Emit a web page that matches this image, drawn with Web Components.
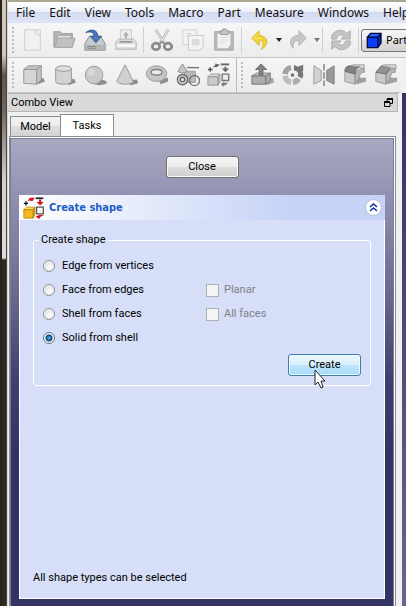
<!DOCTYPE html>
<html lang="en">
<head>
<meta charset="utf-8">
<title>Part - Create shape</title>
<style>
  html, body { height: 100%; }
  body {
    margin: 0;
    overflow: hidden;
    font: 11px/16px Roboto, sans-serif;
    color: #000;
  }
</style>
</head>
<body>
<app-window></app-window>

<script>
const ICONS = {
  new: `<path d="M4 2h17v22H4z" fill="#f1f1f1" stroke="#cdcdcd"/><path d="M15 2l6 6-5-1z" fill="#fff" stroke="#c9c9c9"/>`,
  open: `<path d="M2 21V4h7l2 2h11v5" fill="#b5b5b5" stroke="#9c9c9c"/><path d="M6 8h15v11H6z" fill="#dedede" stroke="#a9a9a9"/><path d="M3 21L6 11h19l-3 10z" fill="#c0c0c0" stroke="#a0a0a0"/>`,
  save: `<path d="M2 17l5-8h12l5 8v7H2z" fill="#c9cbce" stroke="#85878a"/><path d="M3 18h20v5H3z" fill="#b4b6b9"/><path d="M5 20h9M5 22h9" stroke="#85878a"/><path d="M3 5c6-5 13-3 13 4h4l-6 7-6-7h4c0-4-3-6-9-4z" fill="#4a78b8" stroke="#2d5591"/>`,
  print: `<path d="M7 2h12v12H7z" fill="#eee" stroke="#ccc"/><path d="M13 4l3 4h-2v3h-2V8h-2z" fill="#aaa"/><path d="M2 15l3-3h16l3 3v8H2z" fill="#dfdfdf" stroke="#b0b0b0"/><path d="M6 15h14" stroke="#999" stroke-width="2"/><path d="M3 19h20" stroke="#fff" stroke-width="2"/>`,
  cut: `<path d="M6 2l9 14M20 2l-9 14" stroke="#bdbdbd" stroke-width="3" fill="none"/><path d="M6 2l8 13M20 2l-8 13" stroke="#ececec" fill="none"/><ellipse cx="6.500" cy="20" rx="4" ry="3.500" fill="none" stroke="#8b8b8b" stroke-width="3"/><ellipse cx="19.500" cy="20" rx="4" ry="3.500" fill="none" stroke="#8b8b8b" stroke-width="3"/><path d="M9 18l4-3 4 3" fill="none" stroke="#8b8b8b" stroke-width="2"/>`,
  copy: `<path d="M2 2h15v16H2z" fill="#f3f3f3" stroke="#cfcfcf"/><path d="M5 6h6M5 9h4" stroke="#d4d4d4"/><path d="M8 8h16v13l-4 3H8z" fill="#f3f3f3" stroke="#c5c5c5"/><path d="M12 12h8v7h-8z" fill="#dcdcdc"/>`,
  paste: `<path d="M3 4h20v20H3z" fill="#b9b9b9" stroke="#a3a3a3"/><path d="M6 6h14v12l-3 4H6z" fill="#f2f2f2"/><path d="M9 10h8M9 13h8M9 16h5" stroke="#d4d4d4"/><path d="M9 3h3V1h3v2h3v4H9z" fill="#c6c6c6" stroke="#929292"/>`,
  undo: `<path d="M12 3L4 11l8 8v-5c5-1 6 4 2 9 9-4 9-14-2-15z" fill="#f2d335" stroke="#dab624"/><path d="M11 6l-5 5h8" fill="none" stroke="#fbec8d"/>`,
  redo: `<path d="M14 3l8 8-8 8v-5c-6-1-7 4-6 8-6-6-3-14 6-14z" fill="#c7c7c7" stroke="#b2b2b2"/>`,
  refresh: `<path d="M3 12V8c4-7 13-7 16-2l4-3v9h-10l3-3c-3-3-7-1-8 3z" fill="#c4c4c4" stroke="#aaa"/><path d="M23 14v4c-4 7-13 7-16 2l-4 3v-9h10l-3 3c3 3 7 1 8-3z" fill="#c4c4c4" stroke="#aaa"/>`,
  box: `<path d="M14 20l10-4 2 4-8 3z" fill="#8e8e8e"/><path d="M3 7h14v16L3 22z" fill="#d5d5d5" stroke="#939393"/><path d="M3 7l5-4h14l-5 4zM22 3v15l-5 5V7z" fill="#c3c3c3" stroke="#939393"/>`,
  cylinder: `<path d="M16 19l8-2 2 4-8 3z" fill="#8e8e8e"/><path d="M4 6v14c0 4 17 4 17 0V6" fill="#d3d3d3" stroke="#939393"/><ellipse cx="12.500" cy="6" rx="8.500" ry="3" fill="#dfdfdf" stroke="#939393"/>`,
  sphere: `<ellipse cx="18" cy="21" rx="8" ry="3" fill="#8e8e8e"/><circle cx="12" cy="13" r="9.500" fill="#cacaca" stroke="#999"/><circle cx="9" cy="10" r="4" fill="#d8d8d8"/>`,
  cone: `<path d="M15 19l10-1 1 4-8 2z" fill="#8e8e8e"/><path d="M12 2L3 20c2 4 16 4 18 0z" fill="#d0d0d0" stroke="#969696"/>`,
  torus: `<path d="M15 18l10-2v4l-8 3z" fill="#8e8e8e"/><ellipse cx="12.500" cy="11.500" rx="11" ry="8.500" fill="#c6c6c6" stroke="#969696"/><ellipse cx="12.500" cy="10" rx="6" ry="3" fill="#ececec" stroke="#808080" stroke-width="1.500"/>`,
  primitives: `<path d="M9 9h12v12H9z" fill="#b8b8b8" stroke="#a0a0a0"/><path d="M7 1L2 9c2 2 8 2 10 0z" fill="#c7c7c7" stroke="#8b8b8b"/><path d="M12 5h13" stroke="#777" stroke-width="1.500"/><circle cx="7" cy="18" r="5.500" fill="#ddd" stroke="#666" stroke-width="1.500"/><circle cx="7" cy="18" r="2.500" fill="none" stroke="#666" stroke-width="1.500"/><circle cx="20" cy="19" r="5.500" fill="none" stroke="#777" stroke-width="1.500"/>`,
  builder: `<path d="M1 15l3-3h10l-2 3z" fill="#ddd" stroke="#999"/><path d="M1 15h11v9H1zM12 15l2-3v9l-2 3z" fill="#c9c9c9" stroke="#999"/><path d="M1 7h5M3.500 4.500v5" stroke="#555" stroke-width="1.500"/><path d="M6 5l3-3V.5l5 1.500-4 3V4z" fill="#666"/><path d="M15 1.500h9" stroke="#666" stroke-width="2"/><path d="M19 4h2v2h3l-4 4-4-4h3z" fill="#666"/><path d="M16.500 12h7v7h-7z" fill="#eee" stroke="#777" stroke-width="1.500"/><path d="M23 21l-3 3h-2v2l-3-3 4-3v2z" fill="#777"/>`,
  builderColor: `<path d="M1 15l3-3h10l-2 3z" fill="#ffe05a" stroke="#bb8a0c"/><path d="M1 15h11v10H1z" fill="#f6b720" stroke="#bb8a0c"/><path d="M12 15l2-3v9l-2 4z" fill="#d98f0a" stroke="#bb8a0c"/><path d="M1 7.500h5M3.500 5v5" stroke="#111" stroke-width="1.500"/><path d="M5 5l3-4 6 0-3 4-3-1z" fill="#d91320"/><path d="M15 1.500h9" stroke="#222" stroke-width="2"/><path d="M19 3h2.500v3h3l-4.200 4-4.300-4h3z" fill="#d91320"/><path d="M16 12h8v8h-8z" fill="#f5f5f5" stroke="#555" stroke-width="1.500"/><path d="M25 22l-4 1-2 3-4-3 5-2z" fill="#d91320"/>`,
  extrude: `<path d="M17 19l8-3 1 5-8 3z" fill="#a5a5a5"/><path d="M2 14l5-3h15l-5 3z" fill="#ccc" stroke="#777"/><path d="M2 14h15v9H2zM17 14l5-3v8l-5 4z" fill="#acacac" stroke="#777"/><path d="M12 1l6 6h-4v6h-4V7H6z" fill="#858585" stroke="#666"/>`,
  revolve: `<g fill="none" stroke-width="6"><path d="M11 5A8 8 0 0 0 4.500 12" stroke="#a2a2a2"/><path d="M4.500 14A8 8 0 0 0 11 21" stroke="#bdbdbd"/><path d="M13 21A8 8 0 0 0 19 17" stroke="#adadad"/></g><path d="M14 2l4 2 6-2v7h-1c2 3 1 6 0 8l-5-3c1-3 0-4-1-5l-3-1z" fill="#777"/><circle cx="12.500" cy="13" r="2" fill="#777"/>`,
  mirror: `<path d="M2 3l8 5v11l-8 4z" fill="#d2d2d2" stroke="#999"/><path d="M24 3l-8 5v11l8 4z" fill="#999" stroke="#808080"/><path d="M13 1v24" stroke="#999" stroke-width="2" stroke-dasharray="7 2"/>`,
  fillet: `<path d="M13 19l3-3h9v4l-10 3z" fill="#a0a0a0"/><path d="M2 9h11v14L2 20z" fill="#cacaca" stroke="#999"/><path d="M13 12c1-4 5-6 10-6v4c-4 0-5 2-5 6l-5 7z" fill="#b5b5b5" stroke="#909090"/><path d="M2 9c0-4 2-6 6-6l11 1c-4 1-6 4-6 8z" fill="#808080" stroke="#6c6c6c"/><path d="M8 3l3-1h12v4c-3 0-4-1-5-2z" fill="#dcdcdc" stroke="#999"/>`,
  chamfer: `<path d="M13 19l3-3h9v4l-10 3z" fill="#a0a0a0"/><path d="M2 10h11v13L2 20z" fill="#cacaca" stroke="#999"/><path d="M13 12c2-4 5-6 10-6v4c-4 0-5 2-5 6l-5 7z" fill="#b5b5b5" stroke="#909090"/><path d="M2 10l6-7 10 2-5 7z" fill="#929292" stroke="#6c6c6c"/><path d="M8 3l3-1h13v4l-6-1z" fill="#dcdcdc" stroke="#999"/>`,
  cube: `<path d="M2 8l5-6h16l-5 6z" fill="#2a62ff"/><path d="M2 8h16v16H2z" fill="#0a3cff"/><path d="M18 8l5-6v15l-5 7z" fill="#0624b8"/><path d="M2 8l5-6h16v15l-5 7H2zM2 8h16v16M18 8l5-6" fill="none" stroke="#000a3c" stroke-width="2"/>`
}

const svg = name => `<svg viewBox="0 0 26 26" aria-hidden="true">${ICONS[name]}</svg>`

class AppMenuBar extends HTMLElement {
  connectedCallback() {
    const items = ['File', 'Edit', 'View', 'Tools', 'Macro', 'Part', 'Measure', 'Windows', 'Help']

    this.attachShadow({ mode: 'open' }).innerHTML = `
      <style>
        :host {
          display: flex;
          height: 21px;
          padding-left: 1px;
          background: linear-gradient(#fff, #eef1fa 45%, #d5dbf0 50%, #dfe5f6);
        }
        button {
          flex: none;
          border: 0;
          padding: 0 7px;
          background: none;
          color: #111;
          font: 12px/20px "Noto Sans", sans-serif;
        }
      </style>
      ${items.map(item => `<button type="button">${item}</button>`).join('')}
    `
  }
}

class ToolBar extends HTMLElement {
  connectedCallback() {
    this.attachShadow({ mode: 'open' }).innerHTML = `
      <style>
        :host {
          display: flex;
          flex: none;
          align-items: center;
          height: 34px;
          background: linear-gradient(#f6f6f6, #ececec);
        }
        .grip {
          flex: none;
          width: 2px;
          height: 26px;
          margin: 0 3px 0 4px;
          background: repeating-linear-gradient(#bdbdbd 0 2px, transparent 2px 4px);
        }
      </style>
      <div class="grip"></div>
      <slot></slot>
    `
  }
}

class ToolSeparator extends HTMLElement {
  connectedCallback() {
    this.attachShadow({ mode: 'open' }).innerHTML = `
      <style>
        :host {
          flex: none;
          width: 1px;
          height: 26px;
          margin: 0 2px;
          background: #d0d0d0;
        }
      </style>
    `
  }
}

class ToolButton extends HTMLElement {
  connectedCallback() {
    const hasMenu = this.hasAttribute('data-menu')

    this.attachShadow({ mode: 'open' }).innerHTML = `
      <style>
        :host { display: flex; flex: none; align-items: center; }
        button {
          display: grid;
          place-items: center;
          width: 31px;
          height: 30px;
          padding: 0;
          border: 0;
          background: none;
        }
        .drop { width: 7px; }
        svg { width: 24px; height: 24px; }
        .drop svg { width: 6px; height: 4px; }
      </style>
      <button type="button" aria-label="${this.dataset.label}">${svg(this.dataset.icon)}</button>
      ${hasMenu ? `
        <button class="drop" type="button" aria-label="${this.dataset.label} history">
          <svg viewBox="0 0 6 4"><path d="M0 0h6L3 4z" fill="${this.dataset.menu}"/></svg>
        </button>` : ''}
    `
  }
}

class WorkbenchPicker extends HTMLElement {
  connectedCallback() {
    this.attachShadow({ mode: 'open' }).innerHTML = `
      <style>
        :host {
          display: flex;
          flex: none;
          align-items: center;
          box-sizing: border-box;
          width: 130px;
          height: 23px;
          padding-left: 4px;
          gap: 3px;
          border: 1px solid #777;
          border-radius: 3px;
          background: linear-gradient(#f4f4f4, #ececec 50%, #dedede 50%, #d2d2d2);
        }
        svg { flex: none; width: 17px; height: 17px; }
        select {
          appearance: none;
          flex: 1;
          border: 0;
          padding: 0;
          background: none;
          color: #000;
          font: 11px/18px "Noto Sans", sans-serif;
        }
      </style>
      ${svg('cube')}
      <select aria-label="Workbench"><option>Part</option></select>
    `
  }
}

class PushButton extends HTMLElement {
  connectedCallback() {
    this.attachShadow({ mode: 'open' }).innerHTML = `
      <style>
        :host { display: block; width: 73px; }
        button {
          display: block;
          width: 100%;
          height: 22px;
          padding: 0;
          border: 1px solid #707070;
          border-radius: 3px;
          box-shadow: inset 0 0 0 1px #fbfbfb;
          background: linear-gradient(#f4f4f4, #ebebeb 50%, #dcdcdc 50%, #cfcfcf);
          color: #000;
          font: inherit;
        }
        :host([data-hot]) button {
          border-color: #3c7fb1;
          box-shadow: inset 0 0 0 1px #effaff;
          background: linear-gradient(#eaf6fd, #d9f0fc 50%, #bee6fd 50%, #a7d9f5);
        }
      </style>
      <button type="button"><slot></slot></button>
    `
  }
}

class MousePointer extends HTMLElement {
  connectedCallback() {
    this.attachShadow({ mode: 'open' }).innerHTML = `
      <style>
        :host { display: block; pointer-events: none; }
        svg { display: block; width: 13px; height: 20px; }
      </style>
      <svg viewBox="0 0 13 20" aria-hidden="true">
        <path d="M1 1v15l3-3 3 6 2-1-2-6h4z" fill="#fff" stroke="#222"/>
      </svg>
    `
  }
}

class CreateShapeForm extends HTMLElement {
  _renderRow(id, label, option, checked) {
    return `
      <label class="choice" for="${id}">
        <input type="radio" name="shape" id="${id}" ${checked ? 'checked' : ''}>${label}
      </label>
      ${option ? `
        <label class="choice option">
          <input type="checkbox" disabled>${option}
        </label>` : '<span></span>'}
    `
  }

  connectedCallback() {
    this.attachShadow({ mode: 'open' }).innerHTML = `
      <style>
        :host { display: block; }
        fieldset {
          min-width: 0;
          margin: 0;
          padding: 6px 9px 9px;
          border: 1px solid #fff;
          border-radius: 3px;
        }
        legend { padding: 0 2px; margin-left: -4px; }
        .grid {
          display: grid;
          grid-template-columns: 163px 1fr;
          grid-auto-rows: 24px;
        }
        .choice { display: flex; align-items: center; gap: 7px; white-space: nowrap; }
        .option { color: #7f7f85; gap: 5px; }
        input {
          appearance: none;
          box-sizing: border-box;
          width: 12px;
          height: 12px;
          margin: 0;
          border: 1px solid #8e8f8f;
          background: #f4f4f4;
        }
        [type=radio] {
          border-radius: 50%;
          background: radial-gradient(circle at 60% 60%, #fff, #cfd3d6);
          box-shadow: inset 0 0 0 1px #f4f4f4;
        }
        [type=radio]:checked {
          border-color: #5b7390;
          background: radial-gradient(circle, #3f9fd6 0 1px, #0d3d68 3px, #f4f4f4 4px);
        }
        [type=checkbox] { width: 13px; height: 13px; border-color: #b1b1b1; }
        .actions { position: relative; display: flex; justify-content: flex-end; margin-top: 4px; }
        mouse-pointer { position: absolute; right: 34px; top: 15px; }
      </style>
      <fieldset>
        <legend>Create shape</legend>
        <div class="grid">
          ${this._renderRow('edge', 'Edge from vertices')}
          ${this._renderRow('face', 'Face from edges', 'Planar')}
          ${this._renderRow('shell', 'Shell from faces', 'All faces')}
          ${this._renderRow('solid', 'Solid from shell', '', true)}
        </div>
        <div class="actions">
          <push-button data-hot>Create</push-button>
          <mouse-pointer></mouse-pointer>
        </div>
      </fieldset>
    `
  }
}

class TaskBox extends HTMLElement {
  connectedCallback() {
    this.attachShadow({ mode: 'open' }).innerHTML = `
      <style>
        :host { display: flex; flex-direction: column; }
        header {
          display: flex;
          align-items: center;
          height: 25px;
          padding: 0 3px 0 4px;
          gap: 4px;
          background: linear-gradient(90deg, #fff, #c6d3f7 75%);
        }
        header svg { width: 22px; height: 22px; }
        h2 {
          flex: 1;
          margin: 0;
          color: #215dc6;
          font: bold 11px/16px "DejaVu Sans Condensed", "DejaVu Sans", sans-serif;
        }
        button {
          width: 17px;
          height: 17px;
          padding: 0;
          border: 1px solid #b3b9d8;
          border-radius: 50%;
          background: #fff;
          display: grid;
          place-items: center;
        }
        header button svg { width: 9px; height: 9px; }
        .body {
          flex: 1;
          display: flex;
          flex-direction: column;
          justify-content: space-between;
          padding: 12px 13px;
          border: 1px solid #fff;
          border-top: 0;
          background: #d6dff7;
        }
      </style>
      <header>
        ${svg('builderColor')}
        <h2>${this.dataset.title}</h2>
        <button type="button" aria-label="Collapse">
          <svg viewBox="0 0 9 9"><path d="M1 4l3.500-3L8 4M1 8l3.500-3L8 8" fill="none" stroke="#0a2e9c" stroke-width="1.500"/></svg>
        </button>
      </header>
      <div class="body"><slot></slot></div>
    `
  }
}

class ComboView extends HTMLElement {
  connectedCallback() {
    this.attachShadow({ mode: 'open' }).innerHTML = `
      <style>
        :host { display: flex; flex-direction: column; min-width: 0; background: #f0f0f0; }
        .title {
          display: flex;
          align-items: center;
          justify-content: space-between;
          height: 17px;
          margin-right: 4px;
          padding: 0 4px 0 3px;
          border: solid #b4b4b4;
          border-width: 1px 1px 1px 0;
          background: #d9d9d9;
        }
        .title button { display: grid; padding: 0; border: 0; background: none; }
        .title svg { width: 9px; height: 9px; }
        .tabs { display: flex; align-items: flex-end; height: 24px; padding-left: 2px; }
        .tabs button {
          box-sizing: border-box;
          width: 51px;
          height: 20px;
          padding: 0;
          border: 1px solid #898c95;
          border-bottom: 0;
          background: linear-gradient(#f3f3f3, #ececec 50%, #dedede 50%, #d2d2d2);
          color: #000;
          font: inherit;
        }
        .tabs .active { width: 54px; height: 22px; margin-left: -1px; background: #fff; }
        .page {
          flex: 1;
          display: flex;
          flex-direction: column;
          margin: 0 6px 0 1px;
          border: solid #898c95;
          border-width: 1px 1px 0;
          padding: 1px 1px 0 0;
          background: #fff;
        }
        .panel {
          flex: 1;
          display: flex;
          flex-direction: column;
          align-items: stretch;
          gap: 17px;
          padding: 17px 8px 7px;
          border: solid #7c7c90;
          border-width: 1px 1px 0;
          background: linear-gradient(#a9a9c2, #9492b2 55px, #666690 160px, #40406f 240px, #333366 310px);
        }
        .panel > push-button { align-self: center; }
        task-box { flex: 1; }
      </style>
      <div class="title">
        <span>Combo View</span>
        <button type="button" aria-label="Float">
          <svg viewBox="0 0 9 9"><path d="M3 3V1h5.500v4.500H6M.5 4h5.500v4.500H.5z" fill="none" stroke="#000"/><path d="M3 1h6M0 4h6" stroke="#000" stroke-width="2"/></svg>
        </button>
      </div>
      <div class="tabs" role="tablist">
        <button type="button" role="tab">Model</button>
        <button class="active" type="button" role="tab" aria-selected="true">Tasks</button>
      </div>
      <div class="page">
        <div class="panel">
          <push-button>Close</push-button>
          <task-box data-title="Create shape">
            <create-shape-form></create-shape-form>
            <span>All shape types can be selected</span>
          </task-box>
        </div>
      </div>
    `
  }
}

class AppWindow extends HTMLElement {
  connectedCallback() {
    this.attachShadow({ mode: 'open' }).innerHTML = `
      <style>
        :host { display: flex; min-height: 100vh; }
        .edge {
          flex: none;
          width: 4px;
          border: solid #29241f;
          border-width: 0 1px 0 2px;
          border-right-color: #4a443e;
          background: linear-gradient(#cfc7b8 55px, #5b5650 75px, #6b6762 110px, #d0cfcd 180px, #dcdcdc 258px, #2d2822 260px);
        }
        .rim { flex: none; width: 1px; background: #d9d6d0; }
        .window { flex: 1; min-width: 0; display: flex; flex-direction: column; overflow: hidden; background: #f0f0f0; }
        .top { height: 2px; background: #a8a595; }
        tool-bar { border-bottom: 1px solid #c4c4c4; }
        .split { display: flex; flex: none; overflow: hidden; }
        .main { flex: 1; display: flex; }
        combo-view { flex: 1; }
        .view { flex: none; width: 4px; background: linear-gradient(#333366, #66668f); }
        .second { border-right: 1px solid #b9b9b9; padding-right: 2px; }
      </style>
      <div class="edge"></div>
      <div class="rim"></div>
      <div class="window">
        <div class="top"></div>
        <app-menu-bar></app-menu-bar>
        <tool-bar>
          <tool-button data-icon="new" data-label="New"></tool-button>
          <tool-button data-icon="open" data-label="Open"></tool-button>
          <tool-button data-icon="save" data-label="Save"></tool-button>
          <tool-button data-icon="print" data-label="Print"></tool-button>
          <tool-separator></tool-separator>
          <tool-button data-icon="cut" data-label="Cut"></tool-button>
          <tool-button data-icon="copy" data-label="Copy"></tool-button>
          <tool-button data-icon="paste" data-label="Paste"></tool-button>
          <tool-separator></tool-separator>
          <tool-button data-icon="undo" data-label="Undo" data-menu="#222"></tool-button>
          <tool-button data-icon="redo" data-label="Redo" data-menu="#777"></tool-button>
          <tool-separator></tool-separator>
          <tool-button data-icon="refresh" data-label="Refresh"></tool-button>
          <tool-separator></tool-separator>
          <workbench-picker></workbench-picker>
        </tool-bar>
        <div class="split">
          <tool-bar class="second">
            <tool-button data-icon="box" data-label="Box"></tool-button>
            <tool-button data-icon="cylinder" data-label="Cylinder"></tool-button>
            <tool-button data-icon="sphere" data-label="Sphere"></tool-button>
            <tool-button data-icon="cone" data-label="Cone"></tool-button>
            <tool-button data-icon="torus" data-label="Torus"></tool-button>
            <tool-button data-icon="primitives" data-label="Create primitives"></tool-button>
            <tool-button data-icon="builder" data-label="Shape builder"></tool-button>
          </tool-bar>
          <tool-bar>
            <tool-button data-icon="extrude" data-label="Extrude"></tool-button>
            <tool-button data-icon="revolve" data-label="Revolve"></tool-button>
            <tool-button data-icon="mirror" data-label="Mirror"></tool-button>
            <tool-button data-icon="fillet" data-label="Fillet"></tool-button>
            <tool-button data-icon="chamfer" data-label="Chamfer"></tool-button>
          </tool-bar>
        </div>
        <div class="main">
          <combo-view></combo-view>
          <div class="view"></div>
        </div>
      </div>
    `
  }
}

customElements.define('app-menu-bar', AppMenuBar)
customElements.define('tool-bar', ToolBar)
customElements.define('tool-separator', ToolSeparator)
customElements.define('tool-button', ToolButton)
customElements.define('workbench-picker', WorkbenchPicker)
customElements.define('push-button', PushButton)
customElements.define('mouse-pointer', MousePointer)
customElements.define('create-shape-form', CreateShapeForm)
customElements.define('task-box', TaskBox)
customElements.define('combo-view', ComboView)
customElements.define('app-window', AppWindow)
</script>
</body>
</html>
